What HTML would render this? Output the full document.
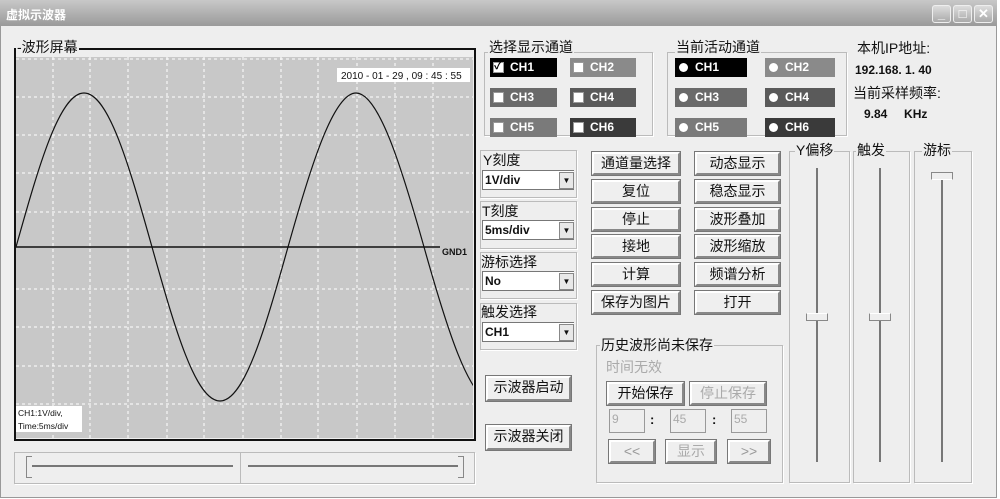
<!DOCTYPE html>
<html><head><meta charset="utf-8"><style>
*{margin:0;padding:0;box-sizing:border-box}
body{width:1000px;height:499px;background:#fff;font-family:"Liberation Sans","Noto Sans CJK SC",sans-serif;font-size:13px;color:#111;position:relative;overflow:hidden}
.a{position:absolute}
#win{left:0;top:0;width:997px;height:498px;background:#eeeeee;border:1px solid #999}
#title{left:0;top:0;width:997px;height:26px;background:linear-gradient(#c8c8c8,#9a9a9a);color:#fff;font-weight:bold;font-size:12px;padding:6px 0 0 6px}
.tb{top:5px;width:19px;height:18px;background:linear-gradient(#ddd,#aaa);border:1px solid #eee;border-radius:3px;color:#fff;font-size:13px;text-align:center;line-height:16px;font-weight:bold}
.grp{border:1px solid #bbb;box-shadow:1px 1px 0 #fff}
.lg{background:#eeeeee;padding:0 1px;font-size:14px;line-height:15px}
.ch{height:19px;color:#fff;font-weight:bold;font-size:12px;line-height:19px;padding-left:20px}
.ch i{position:absolute;left:3px;top:4px;width:11px;height:11px;background:#fff;border:1px solid #999}
.ch b{position:absolute;left:4px;top:5px;width:9px;height:9px;background:#fff;border-radius:50%}
.btn{height:23px;border:2px solid #888;border-top-color:#fff;border-left-color:#fff;outline:1px solid #777;background:#efefef;text-align:center;font-size:14px;line-height:19px}
.sel{height:20px;background:#fff;border:1px solid #777;border-right:none;font-size:12px;font-weight:bold;line-height:18px;padding-left:2px}
.sel span{position:absolute;right:0;top:1px;width:15px;height:17px;background:#e8e8e8;border:1px solid #888;font-size:8px;text-align:center;line-height:15px}
.inp{width:36px;height:24px;background:#eee;border:1px solid #999;color:#aaa;font-size:12px;padding:2px}
</style></head><body>
<div id="win" class="a"></div>
<div id="title" class="a">虚拟示波器</div>
<div class="a tb" style="left:932px">_</div><div class="a tb" style="left:953px">□</div><div class="a tb" style="left:974px">✕</div>

<!-- scope -->
<div class="a" style="left:14px;top:48px;width:462px;height:393px;border:2px solid #111;border-top-width:2px"></div>
<div class="a lg" style="left:16px;top:40px">-波形屏幕</div>
<svg class="a" style="left:16px;top:57px" width="457" height="381" viewBox="16 57 457 381">
<rect x="16" y="57" width="457" height="381" fill="#c8c8c8"/>
<g stroke="#fff" stroke-dasharray="3,3" stroke-width="1">
<line x1="16" y1="59" x2="473" y2="59"/><line x1="16" y1="97" x2="473" y2="97"/><line x1="16" y1="135" x2="473" y2="135"/><line x1="16" y1="173" x2="473" y2="173"/><line x1="16" y1="212" x2="473" y2="212"/><line x1="16" y1="289" x2="473" y2="289"/><line x1="16" y1="327" x2="473" y2="327"/><line x1="16" y1="366" x2="473" y2="366"/><line x1="16" y1="404" x2="473" y2="404"/>
<line x1="53" y1="57" x2="53" y2="438"/><line x1="90" y1="57" x2="90" y2="438"/><line x1="128" y1="57" x2="128" y2="438"/><line x1="167" y1="57" x2="167" y2="438"/><line x1="204" y1="57" x2="204" y2="438"/><line x1="243" y1="57" x2="243" y2="438"/><line x1="281" y1="57" x2="281" y2="438"/><line x1="318" y1="57" x2="318" y2="438"/><line x1="357" y1="57" x2="357" y2="438"/><line x1="395" y1="57" x2="395" y2="438"/><line x1="433" y1="57" x2="433" y2="438"/>
</g>
<line x1="16" y1="247" x2="440" y2="247" stroke="#111" stroke-width="1.5"/>
<path d="M16,247 C38.7,166.1 59.5,93 84,93 S129.3,166.1 152,247 S195.5,401 220,401 S265.3,327.9 288,247 S333.5,93 356,93 S401.3,166.1 424,247 S469.5,401 492,401" fill="none" stroke="#111" stroke-width="1.2"/>
<rect x="337" y="68" width="133" height="14" fill="#fff"/>
<text x="341" y="79" font-size="10" font-family="Liberation Sans" fill="#111">2010 - 01 - 29 , 09 : 45 : 55</text>
<text x="442" y="255" font-size="9" font-family="Liberation Sans" font-weight="bold" fill="#111">GND1</text>
<rect x="16" y="406" width="66" height="26" fill="#fff"/>
<text x="18" y="416" font-size="8.5" font-family="Liberation Sans" fill="#111">CH1:1V/div,</text>
<text x="18" y="429" font-size="8.5" font-family="Liberation Sans" fill="#111">Time:5ms/div</text>
</svg>
<!-- h slider -->
<div class="a grp" style="left:14px;top:452px;width:461px;height:32px"></div>
<div class="a" style="left:240px;top:452px;width:1px;height:32px;background:#bbb"></div>
<div class="a" style="left:32px;top:465px;width:201px;height:2px;background:#777"></div>
<div class="a" style="left:248px;top:465px;width:210px;height:2px;background:#777"></div>
<div class="a" style="left:26px;top:456px;width:6px;height:22px;border:1px solid #888;border-right:none;background:#eee"></div>
<div class="a" style="left:458px;top:456px;width:6px;height:22px;border:1px solid #888;border-left:none;background:#eee"></div>

<!-- channel groups -->
<div class="a grp" style="left:484px;top:52px;width:169px;height:84px"></div>
<div class="a lg" style="left:488px;top:40px">选择显示通道</div>
<div class="a ch" style="left:490px;top:58px;width:67px;background:#000"><i></i><span style="position:absolute;left:4px;top:-1px;color:#000;font-size:11px">✓</span>CH1</div>
<div class="a ch" style="left:570px;top:58px;width:66px;background:#8a8a8a"><i></i>CH2</div>
<div class="a ch" style="left:490px;top:88px;width:67px;background:#6a6a6a"><i></i>CH3</div>
<div class="a ch" style="left:570px;top:88px;width:66px;background:#5a5a5a"><i></i>CH4</div>
<div class="a ch" style="left:490px;top:118px;width:67px;background:#7a7a7a"><i></i>CH5</div>
<div class="a ch" style="left:570px;top:118px;width:66px;background:#3a3a3a"><i></i>CH6</div>

<div class="a grp" style="left:667px;top:52px;width:180px;height:84px"></div>
<div class="a lg" style="left:675px;top:40px">当前活动通道</div>
<div class="a ch" style="left:675px;top:58px;width:72px;background:#000"><b></b>CH1</div>
<div class="a ch" style="left:765px;top:58px;width:70px;background:#8a8a8a"><b></b>CH2</div>
<div class="a ch" style="left:675px;top:88px;width:72px;background:#6a6a6a"><b></b>CH3</div>
<div class="a ch" style="left:765px;top:88px;width:70px;background:#5a5a5a"><b></b>CH4</div>
<div class="a ch" style="left:675px;top:118px;width:72px;background:#7a7a7a"><b></b>CH5</div>
<div class="a ch" style="left:765px;top:118px;width:70px;background:#3a3a3a"><b></b>CH6</div>

<div class="a" style="left:857px;top:38px;font-size:14px">本机IP地址:</div>
<div class="a" style="left:855px;top:63px;font-size:12px;font-weight:bold">192.168. 1. 40</div>
<div class="a" style="left:853px;top:83px;font-size:14px">当前采样频率:</div>
<div class="a" style="left:864px;top:107px;font-size:12px;font-weight:bold">9.84 &nbsp;&nbsp;&nbsp; KHz</div>

<!-- selects -->
<div class="a grp" style="left:480px;top:150px;width:97px;height:48px"></div>
<div class="a" style="left:483px;top:150px;font-size:14px">Y刻度</div>
<div class="a sel" style="left:482px;top:170px;width:92px">1V/div<span>▼</span></div>
<div class="a grp" style="left:480px;top:201px;width:97px;height:48px"></div>
<div class="a" style="left:482px;top:201px;font-size:14px">T刻度</div>
<div class="a sel" style="left:482px;top:220px;width:92px">5ms/div<span>▼</span></div>
<div class="a grp" style="left:480px;top:252px;width:97px;height:47px"></div>
<div class="a" style="left:481px;top:252px;font-size:14px">游标选择</div>
<div class="a sel" style="left:482px;top:271px;width:92px">No<span>▼</span></div>
<div class="a grp" style="left:480px;top:303px;width:97px;height:47px"></div>
<div class="a" style="left:481px;top:302px;font-size:14px">触发选择</div>
<div class="a sel" style="left:482px;top:322px;width:92px">CH1<span>▼</span></div>

<div class="a btn" style="left:486px;top:376px;width:85px;height:25px">示波器启动</div>
<div class="a btn" style="left:486px;top:425px;width:85px;height:25px">示波器关闭</div>

<!-- buttons -->
<div class="a btn" style="left:592px;top:152px;width:88px">通道量选择</div>
<div class="a btn" style="left:592px;top:180px;width:88px">复位</div>
<div class="a btn" style="left:592px;top:208px;width:88px">停止</div>
<div class="a btn" style="left:592px;top:235px;width:88px">接地</div>
<div class="a btn" style="left:592px;top:263px;width:88px">计算</div>
<div class="a btn" style="left:592px;top:291px;width:88px">保存为图片</div>
<div class="a btn" style="left:695px;top:152px;width:85px">动态显示</div>
<div class="a btn" style="left:695px;top:180px;width:85px">稳态显示</div>
<div class="a btn" style="left:695px;top:208px;width:85px">波形叠加</div>
<div class="a btn" style="left:695px;top:235px;width:85px">波形缩放</div>
<div class="a btn" style="left:695px;top:263px;width:85px">频谱分析</div>
<div class="a btn" style="left:695px;top:291px;width:85px">打开</div>

<!-- history -->
<div class="a grp" style="left:596px;top:345px;width:187px;height:138px"></div>
<div class="a lg" style="left:600px;top:338px">历史波形尚未保存</div>
<div class="a" style="left:606px;top:357px;font-size:14px;color:#aaa">时间无效</div>
<div class="a btn" style="left:607px;top:382px;width:77px">开始保存</div>
<div class="a btn" style="left:690px;top:382px;width:76px;color:#aaa">停止保存</div>
<div class="a inp" style="left:609px;top:409px">9</div><div class="a" style="left:650px;top:412px;font-weight:bold">:</div>
<div class="a inp" style="left:670px;top:409px">45</div><div class="a" style="left:712px;top:412px;font-weight:bold">:</div>
<div class="a inp" style="left:731px;top:409px">55</div>
<div class="a btn" style="left:609px;top:440px;width:46px;color:#999">&lt;&lt;</div>
<div class="a btn" style="left:666px;top:440px;width:50px;color:#aaa">显示</div>
<div class="a btn" style="left:728px;top:440px;width:42px;color:#999">&gt;&gt;</div>

<!-- vertical sliders -->
<div class="a grp" style="left:789px;top:151px;width:61px;height:332px"></div>
<div class="a lg" style="left:795px;top:143px">Y偏移</div>
<div class="a grp" style="left:853px;top:151px;width:57px;height:332px"></div>
<div class="a lg" style="left:856px;top:143px">触发</div>
<div class="a grp" style="left:914px;top:151px;width:58px;height:332px"></div>
<div class="a lg" style="left:922px;top:143px">游标</div>
<div class="a" style="left:816px;top:168px;width:2px;height:294px;background:#777"></div>
<div class="a" style="left:879px;top:168px;width:2px;height:294px;background:#777"></div>
<div class="a" style="left:941px;top:172px;width:2px;height:290px;background:#777"></div>
<div class="a" style="left:806px;top:313px;width:22px;height:8px;border:1px solid #888;border-top-color:#fff;background:#eee"></div>
<div class="a" style="left:869px;top:313px;width:22px;height:8px;border:1px solid #888;border-top-color:#fff;background:#eee"></div>
<div class="a" style="left:931px;top:172px;width:22px;height:8px;border:1px solid #888;border-bottom-color:#fff;background:#eee"></div>
</body></html>
